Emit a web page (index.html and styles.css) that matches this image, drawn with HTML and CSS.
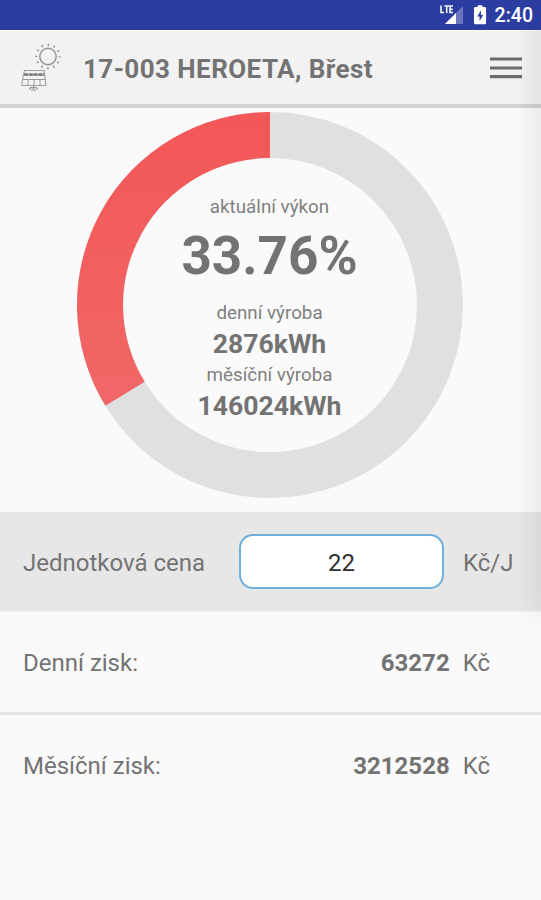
FILE: index.html
```html
<!DOCTYPE html>
<html lang="cs">
<head>
<meta charset="utf-8">
<title>17-003 HEROETA, Břest</title>
<link rel="stylesheet" href="styles.css">
</head>
<body>
<div class="status">
  <svg class="signal" width="25" height="22" viewBox="0 0 25 22">
    <path d="M23 2v18H5z" fill="#fff" fill-opacity=".3"/>
    <path d="M16 9v11H5z" fill="#fff"/>
    <path d="M1 1.500v7h3M4.500 2h4.500M6.700 2v7M13 2h-3v6.500h3M10 5.200h2.700" fill="none" stroke="#fff" stroke-width="1.500"/>
  </svg>
  <svg class="battery" width="13" height="20" viewBox="0 0 14 21">
    <path d="M4 0h5v2h2.500Q13 2 13 3.500v15.500q0 1.500-1.500 1.500h-10Q0 20.500 0 19V3.500Q0 2 1.500 2H4z" fill="#fff"/>
    <path d="M7.500 5.500 3.500 12H6v5l4-6.500H7.500z" fill="#3040a0"/>
  </svg>
  <span class="clock">2:40</span>
</div>
<div class="screen">
  <header class="bar">
    <svg class="logo" width="42" height="52" viewBox="0 0 42 52" fill="none" stroke="#929292">
      <circle cx="28" cy="14.500" r="8.200" stroke-width="1.400"/>
      <circle cx="28" cy="14.500" r="11.700" stroke-width="2.200" stroke-dasharray="1.500 4.626" stroke-dashoffset=".75"/>
      <path d="M4.500 28.500h20M4 33h21M2.500 37.500h23.500M1.500 43.500h24.500M4.500 28l-3 15.500M24 28l2 15.500M8 37v6M14 37v6M20 37v6" stroke-width=".9"/>
      <path d="M4 32.500h20" stroke="#777" stroke-width="2.400" stroke-dasharray="4 .8"/>
      <path d="M13.500 43v4M9.500 47.500q1-3 4-1.500 3-1.500 4 1.500M11 48h5" stroke-width="1.200"/>
    </svg>
    <h1 class="title">17-003 HEROETA, Břest</h1>
    <svg class="menu" width="32" height="24" viewBox="0 0 32 24" stroke="#6c6c6c" stroke-width="3.200"><path d="M0 3h32M0 12h32M0 20.700h32"/></svg>
  </header>
  <section class="gauge">
    <svg class="ring" viewBox="0 0 386 386">
      <defs><linearGradient id="red" x1="0" y1="0" x2="0" y2="1"><stop offset="0" stop-color="#f35757"/><stop offset="1" stop-color="#f16767"/></linearGradient></defs>
      <circle cx="193" cy="193" r="170" fill="none" stroke="#e0e0e0" stroke-width="46"/>
      <path d="M193 0A193 193 0 0 0 28.400 293.800L67.700 269.800A147 147 0 0 1 193 46z" fill="url(#red)"/>
    </svg>
    <div class="readings">
      <span class="label">aktuální výkon</span>
      <strong class="power">33.76%</strong>
      <span class="label">denní výroba</span>
      <strong class="amount">2876kWh</strong>
      <span class="label">měsíční výroba</span>
      <strong class="amount">146024kWh</strong>
    </div>
  </section>
  <section class="price">
    <label class="price-label" for="price">Jednotková cena</label>
    <input id="price" class="price-input" value="22">
    <span class="price-unit">Kč/J</span>
  </section>
  <section class="profit day">
    <span class="profit-label">Denní zisk:</span><strong class="sum">63272</strong><span class="unit">Kč</span>
  </section>
  <section class="profit">
    <span class="profit-label">Měsíční zisk:</span><strong class="sum">3212528</strong><span class="unit">Kč</span>
  </section>
  <div class="edge"></div>
</div>
</body>
</html>
```

FILE: styles.css
```css
* { box-sizing: border-box; }
body { margin: 0; height: 900px; overflow: hidden; background: #fafafa; color: #737373; font: 24px/30px Roboto, sans-serif; }
.status { height: 30px; background: #2c3da1; display: flex; align-items: flex-start; justify-content: flex-end; padding: 4px 8px 0 0; color: #fff; }
.battery { margin: 1px 8px 0 9px; }
.clock { font-size: 19.500px; line-height: 24px; font-weight: 500; }
.screen { position: relative; }
.bar { height: 78px; background: #f2f2f2; border-top: 1px solid #fff; border-bottom: 4px solid #d2d2d2; display: flex; align-items: center; padding: 0 19px 0 20px; }
.logo { flex: none; }
.title { flex: 1; margin: 2px 0 0 21px; font-size: 26px; line-height: 30px; font-weight: 700; letter-spacing: .43px; white-space: nowrap; }
.menu { margin-top: 1px; }
.gauge { height: 404px; padding: 4px 2px 0 0; display: grid; justify-items: center; align-items: start; }
.ring { grid-area: 1 / 1; width: 386px; height: 386px; }
.readings { grid-area: 1 / 1; display: flex; flex-direction: column; align-items: center; padding-top: 80px; }
.label { font-size: 18.800px; line-height: 31px; color: #808080; }
.amount { font-size: 26.600px; line-height: 29px; margin-bottom: 2px; }
.power { font-size: 53px; line-height: 67px; margin-bottom: 8px; }
.price { height: 100px; background: #e7e7e7; border-bottom: 1px solid #efefef; display: flex; align-items: center; padding-left: 23px; }
.price-label { width: 216px; padding-top: 2px; }
.price-input { width: 205px; height: 55px; border: 2px solid #71afdc; border-radius: 14px; background: #fff; text-align: center; font: 24px Roboto, sans-serif; color: #303030; padding: 2px 0 0; }
.price-unit { margin-left: 19px; padding-top: 2px; }
.profit { height: 103px; display: flex; align-items: center; padding: 2px 51px 0 23px; }
.day { border-bottom: 3px solid #e5e5e5; }
.day + .profit { padding: 0 51px 2px 23px; }
.profit-label { flex: 1; }
.unit { margin-left: 13px; }
.edge { position: absolute; top: 0; right: 0; width: 26px; height: 600px; background: linear-gradient(to left, rgba(0,0,0,.055), transparent); -webkit-mask-image: linear-gradient(#000 94%, transparent); mask-image: linear-gradient(#000 94%, transparent); pointer-events: none; }
```
